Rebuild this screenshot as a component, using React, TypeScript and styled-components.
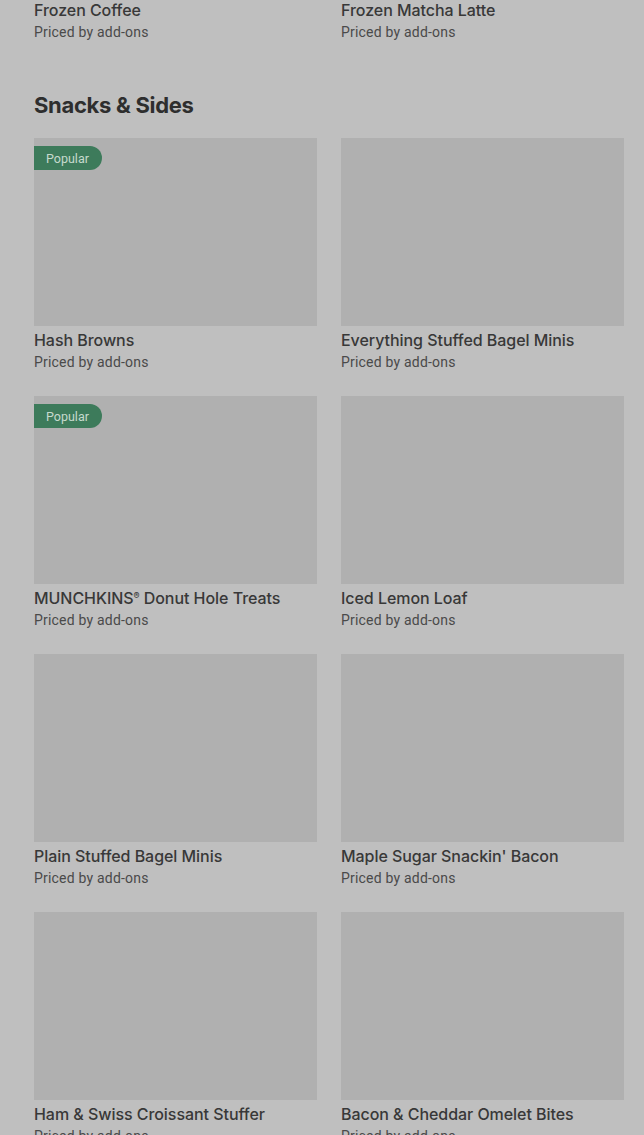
import React from "react";
import styled, { createGlobalStyle } from "styled-components";

const Global = createGlobalStyle`
  html, body { margin: 0; padding: 0; background: #bfbfbf; }
  body { font-family: "Inter", "Roboto", sans-serif; -webkit-font-smoothing: antialiased; }
`;

const Page = styled.div`
  padding: 0 20px 0 34px;
  margin-top: -192px;
  overflow: hidden;
  height: 1327px;
`;

const Section = styled.section`
  display: flex;
  flex-direction: column;
`;

const Heading = styled.h2`
  margin: 49px 0 19px;
  font-family: "Inter", sans-serif;
  font-size: 22px;
  line-height: 28px;
  font-weight: 700;
  letter-spacing: -0.3px;
  color: #2e2e2e;
`;

const Grid = styled.div`
  display: grid;
  grid-template-columns: 283px 283px;
  column-gap: 24px;
  row-gap: 24px;
`;

const Card = styled.div`
  display: flex;
  flex-direction: column;
`;

const Thumb = styled.div`
  position: relative;
  height: 188px;
  background: #b0b0b0;
`;

const Badge = styled.span`
  position: absolute;
  top: 8px;
  left: 0;
  height: 24px;
  padding: 0 12px 0 12px;
  width: 44px;
  display: flex;
  align-items: center;
  background: #3d7b5b;
  color: #c6dacd;
  font-family: "Roboto", sans-serif;
  font-size: 12.5px;
  border-radius: 0 12px 12px 0;
`;

const Title = styled.div`
  margin-top: 2px;
  height: 24px;
  font-family: "Inter", sans-serif;
  font-size: 16px;
  line-height: 24px;
  font-weight: 500;
  letter-spacing: -0.05px;
  color: #383838;
`;

const Reg = styled.span`
  font-size: 9px;
  line-height: 0;
  vertical-align: 5px;
`;

const Sub = styled.div`
  font-family: "Roboto", sans-serif;
  font-size: 14px;
  line-height: 20px;
  letter-spacing: 0.2px;
  color: #4a4a4a;
`;

type Item = { name: string; reg?: string; popular?: boolean };

const prev: Item[] = [{ name: "Frozen Coffee" }, { name: "Frozen Matcha Latte" }];

const snacks: Item[] = [
  { name: "Hash Browns", popular: true },
  { name: "Everything Stuffed Bagel Minis" },
  { name: "MUNCHKINS", reg: " Donut Hole Treats", popular: true },
  { name: "Iced Lemon Loaf" },
  { name: "Plain Stuffed Bagel Minis" },
  { name: "Maple Sugar Snackin' Bacon" },
  { name: "Ham & Swiss Croissant Stuffer" },
  { name: "Bacon & Cheddar Omelet Bites" },
];

function ItemCard({ item }: { item: Item }) {
  return (
    <Card>
      <Thumb>{item.popular && <Badge>Popular</Badge>}</Thumb>
      <Title>
        {item.name}
        {item.reg !== undefined && (
          <>
            <Reg>®</Reg>
            {item.reg}
          </>
        )}
      </Title>
      <Sub>Priced by add-ons</Sub>
    </Card>
  );
}

export default function App() {
  return (
    <>
      <Global />
      <Page>
        <Section>
          <Grid>
            {prev.map((i) => (
              <ItemCard key={i.name} item={i} />
            ))}
          </Grid>
        </Section>
        <Section>
          <Heading>Snacks &amp; Sides</Heading>
          <Grid>
            {snacks.map((i) => (
              <ItemCard key={i.name + (i.reg || "")} item={i} />
            ))}
          </Grid>
        </Section>
      </Page>
    </>
  );
}
